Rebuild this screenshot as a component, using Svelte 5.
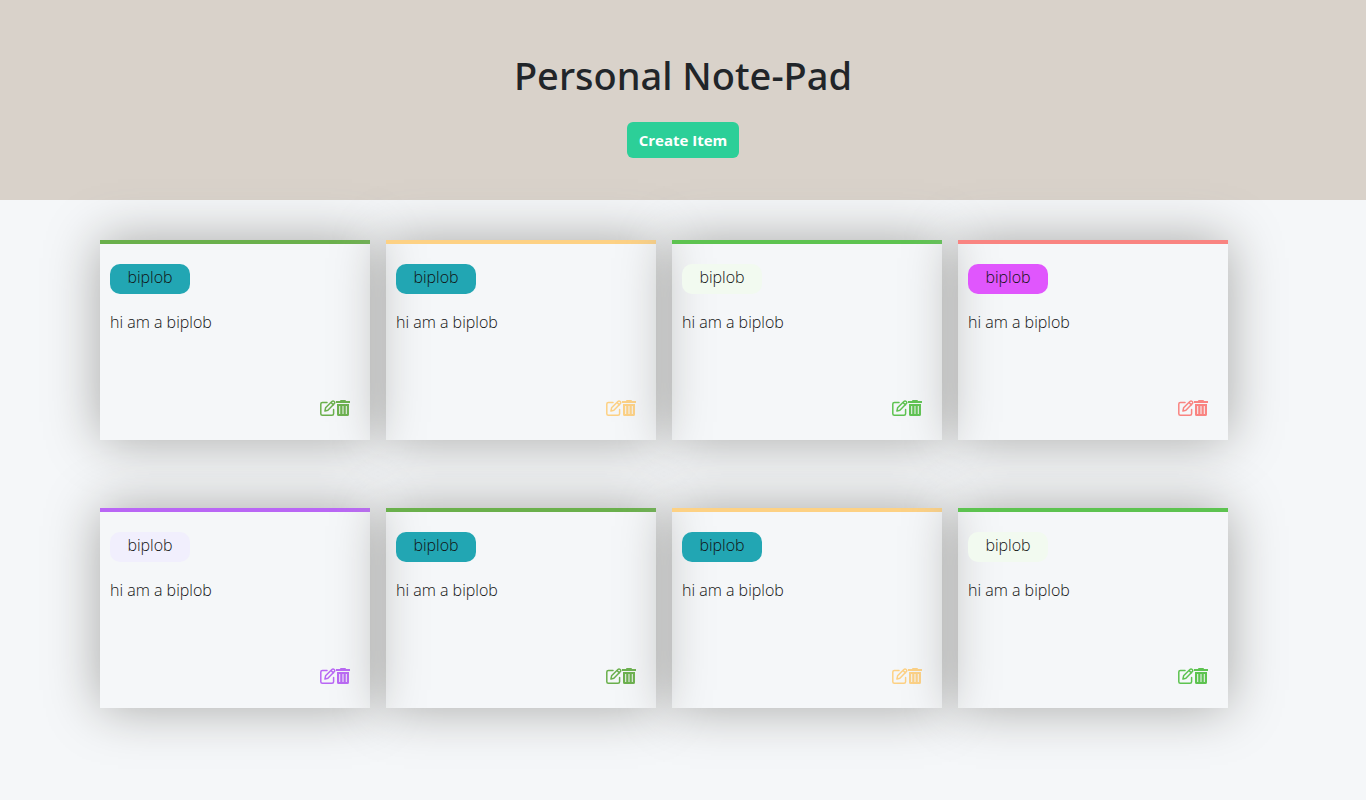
<script>
  const teal = '#22a6b3';
  const notes = [
    { accent: '#6ab04c', label: teal },
    { accent: '#fdd184', label: teal },
    { accent: '#5dc350', label: '#f2faf0' },
    { accent: '#f98481', label: '#e056fd' },
    { accent: '#b966f5', label: '#f1effd' },
    { accent: '#6ab04c', label: teal },
    { accent: '#fdd184', label: teal },
    { accent: '#5dc350', label: '#f2faf0' }
  ];
</script>

<header>
  <h1>Personal Note-Pad</h1>
  <button class="create" type="button">Create Item</button>
</header>

<main>
  {#each notes as note}
    <article style:--accent={note.accent} style:--label={note.label}>
      <h2>biplob</h2>
      <p>hi am a biplob</p>
      <div class="actions">
        <button type="button" aria-label="Edit">
          <svg viewBox="0 0 16 16" width="16" height="16" fill="none" stroke="currentColor" stroke-width="1.5" stroke-linejoin="round" stroke-linecap="round">
            <path d="M7 2.500H2.400Q.8 2.500.8 4v9.700q0 1.500 1.600 1.500h9.600q1.600 0 1.600-1.500V9.500" />
            <path d="m4.900 11.100.7-3.300 6.300-6.300q1.100-1.100 2.300 0t0 2.300L7.900 10.200zM11 2.500l2.400 2.400" />
          </svg>
        </button>
        <button type="button" aria-label="Delete">
          <svg viewBox="0 0 14 16" width="14" height="16" fill="currentColor">
            <path d="M0 1h4q0-1 1-1h4q1 0 1 1h4v2H0z" />
            <path fill-rule="evenodd" d="M1 4h12v10.500q0 1.500-1.500 1.500h-9Q1 16 1 14.500zM3.200 6v8h1V6zM6.500 6v8h1V6zM9.800 6v8h1V6z" />
          </svg>
        </button>
      </div>
    </article>
  {/each}
</main>

<style>
  :global(body) {
    margin: 0;
    background: #f5f7f9;
    color: #212529;
    font: 16px/24px "Open Sans", "Noto Sans", sans-serif;
  }
  button {
    font: inherit;
    border: 0;
    cursor: pointer;
  }
  header {
    display: flex;
    flex-direction: column;
    align-items: center;
    gap: 23px;
    padding: 51px 20px 42px;
    background: #d9d2ca;
  }
  h1 {
    margin: 0;
    font-family: "Noto Sans", sans-serif;
    font-size: 38px;
    font-weight: 500;
    line-height: 48px;
  }
  .create {
    height: 36px;
    padding: 0 12px;
    border-radius: 6px;
    background: #2ccf98;
    color: #fff;
    font-size: 15px;
    font-weight: 700;
  }
  main {
    display: grid;
    grid-template-columns: repeat(auto-fill, 270px);
    gap: 68px 16px;
    padding: 40px 100px 92px;
  }
  article {
    box-sizing: border-box;
    display: flex;
    flex-direction: column;
    min-height: 200px;
    padding: 20px 20px 20px 10px;
    border-top: 4px solid var(--accent);
    box-shadow: 0 0 50px #a7a7a5;
  }
  h2 {
    margin: 0 0 16px;
    width: 80px;
    height: 30px;
    border-radius: 10px;
    background: var(--label);
    font-size: 16px;
    font-weight: 330;
    line-height: 26px;
    text-align: center;
    color: #111;
  }
  p {
    margin: 0;
    font-weight: 330;
    color: #111;
  }
  .actions {
    display: flex;
    justify-content: flex-end;
    margin-top: auto;
    padding-bottom: 4px;
  }
  .actions button {
    display: flex;
    padding: 0;
    background: none;
    color: var(--accent);
  }
</style>
